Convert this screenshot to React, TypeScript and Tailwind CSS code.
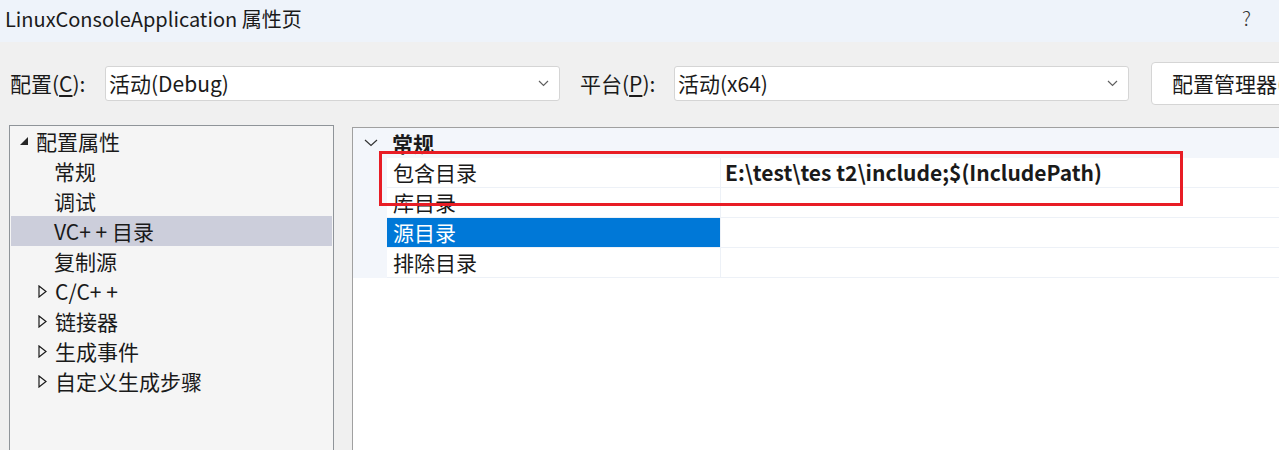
import React from "react";

const font = "font-['Segoe_UI','Noto_Sans_CJK_SC',sans-serif]";

// collapsed / expanded markers used in the tree
const Collapsed = () => (
  <svg width="9" height="13" viewBox="0 0 9 13" className="shrink-0">
    <path d="M1 1 L8 6.5 L1 12 Z" fill="none" stroke="#1a1a1a" strokeWidth="1.2" />
  </svg>
);

const Expanded = () => (
  <svg width="10" height="10" viewBox="0 0 10 10" className="shrink-0">
    <path d="M9 1 L9 9 L1 9 Z" fill="#262626" />
  </svg>
);

const Chevron = ({ w = 11, h = 7, color = "#606060" }: { w?: number; h?: number; color?: string }) => (
  <svg width={w} height={h} viewBox={`0 0 ${w} ${h}`} className="shrink-0">
    <path d={`M1 1 L${w / 2} ${h - 1.5} L${w - 1} 1`} fill="none" stroke={color} strokeWidth="1.2" />
  </svg>
);

const Combo = ({ text }: { text: string }) => (
  <div className="w-[455px] h-[35px] shrink-0 bg-white border border-[#d5d5d5] rounded-[3px] flex items-center justify-between pl-[3px] pr-[10px]">
    <span>{text}</span>
    <Chevron />
  </div>
);

const tree = [
  { label: "常规" },
  { label: "调试" },
  { label: "VC+ +\u00a0目录", selected: true },
  { label: "复制源" },
  { label: "C/C+ +", group: true },
  { label: "链接器", group: true },
  { label: "生成事件", group: true },
  { label: "自定义生成步骤", group: true },
];

const rows = [
  { name: "包含目录", value: "E:\\test\\tes t2\\include;$(IncludePath)" },
  { name: "库目录", value: "" },
  { name: "源目录", value: "", selected: true },
  { name: "排除目录", value: "" },
];

export default function App() {
  return (
    <div className={`${font} w-full h-[450px] overflow-hidden bg-[#f0f0f0] text-[21px] leading-none text-[#1a1a1a] relative`}>
      {/* title bar */}
      <div className="h-[42px] bg-[#eef3fa] flex items-center justify-between pl-[5px] pr-[28px]">
        <span className="text-[20px] pb-[4px]">LinuxConsoleApplication 属性页</span>
        <span className="text-[20px] font-light pb-[6px] text-[#333]">?</span>
      </div>

      {/* config row */}
      <div className="h-[83px] flex items-center pl-[10px]">
        <span className="w-[95px] shrink-0">
          配置(<span className="underline underline-offset-[3px]">C</span>):
        </span>
        <Combo text="活动(Debug)" />
        <span className="ml-[20px] w-[94px] shrink-0">
          平台(<span className="underline underline-offset-[3px]">P</span>):
        </span>
        <Combo text="活动(x64)" />
        <div className="ml-[22px] h-[43px] shrink-0 bg-white border border-[#d5d5d5] rounded-[4px] flex items-center pl-[20px] pr-[20px] whitespace-nowrap">
          配置管理器(O)...
        </div>
      </div>

      {/* panels */}
      <div className="flex items-start">
        <div className="ml-[9px] w-[325px] h-[340px] shrink-0 bg-[#f5f5f5] border border-[#8f9499] px-[1px]">
          <div className="h-[30px] flex items-center pl-[8px] gap-[7px]">
            <Expanded />
            <span>配置属性</span>
          </div>
          {tree.map((t) => (
            <div
              key={t.label}
              className={`h-[30px] flex items-center gap-[8px] ${t.group ? "pl-[27px]" : "pl-[43px]"} ${t.selected ? "bg-[#cccedb]" : ""}`}
            >
              {t.group && <Collapsed />}
              <span>{t.label}</span>
            </div>
          ))}
        </div>

        <div className="ml-[18px] mt-[2px] flex-1 h-[340px] bg-white border-l border-t border-[#a0a0a0] relative">
          <div className="h-[30px] bg-[#f3f6fb] flex items-center pl-[11px]">
            <Chevron w={14} h={8} color="#333" />
            <span className="ml-[14px] font-bold">常规</span>
          </div>
          <div className="flex">
            <div className="w-[34px] bg-[#f3f6fb] shrink-0" />
            <div className="flex-1">
              {rows.map((r) => (
                <div key={r.name} className="h-[30px] flex border-b border-[#edf1f7]">
                  <div
                    className={`w-[334px] shrink-0 flex items-center pl-[6px] border-r border-[#edf1f7] ${r.selected ? "bg-[#0078d7] text-white" : ""}`}
                  >
                    {r.name}
                  </div>
                  <div className="flex-1 flex items-center pl-[4px] font-bold text-[21px]">{r.value}</div>
                </div>
              ))}
            </div>
          </div>

          {/* highlight box */}
          <div className="absolute left-[26px] top-[23px] w-[804px] h-[55px] border-[3px] border-[#e81d25]" />
        </div>
      </div>
    </div>
  );
}
